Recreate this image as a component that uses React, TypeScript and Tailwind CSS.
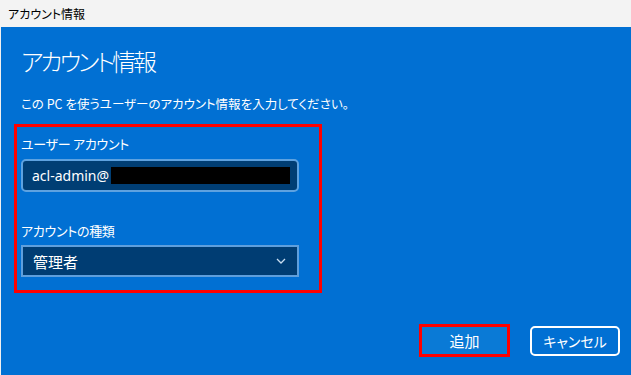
import React from "react";

const jp = "font-['Noto_Sans_CJK_JP','Noto_Sans',sans-serif] [font-feature-settings:'palt']";

export default function App() {
  return (
    <div className={`w-[631px] h-[375px] bg-[#f0f0f0] flex flex-col overflow-hidden ${jp}`}>
      <div className="h-[27px] bg-[#f3f3f3] flex items-center pl-[8px] text-[12px] leading-none text-black">
        アカウント情報
      </div>
      <div className="flex-1 ml-[1px] bg-[#0170d3] flex flex-col text-white pl-[20px]">
        <div className="mt-[18px] text-[24px] leading-[32px] font-light tracking-[-3px]">アカウント情報</div>
        <div className="mt-[18px] text-[12.5px] leading-[18px]">
          この PC を使うユーザーのアカウント情報を入力してください。
        </div>
        <div className="mt-[11px] ml-[-7px] w-[308px] h-[169px] border-[3px] border-[#ff0000] pl-[4px] pt-[8px] flex flex-col">
          <div className="text-[13px] leading-[18px] tracking-[-0.3px]">ユーザー アカウント</div>
          <div className="mt-[6px] w-[278px] h-[33px] rounded-[5px] border-2 border-[#5ea2e0] bg-[#003e74] flex items-center pl-[9px]">
            <span className="font-['Noto_Sans',sans-serif] text-[14px] leading-none [font-feature-settings:normal]">acl-admin@</span>
            <div className="ml-[2px] w-[179px] h-[17px] bg-black" />
          </div>
          <div className="mt-[30px] text-[13px] leading-[18px] tracking-[-0.3px]">アカウントの種類</div>
          <div className="mt-[5px] w-[278px] h-[32px] border-2 border-[#5f9fdc] bg-[#003d73] flex items-center justify-between pl-[10px] pr-[10px]">
            <span className="text-[15px] leading-none">管理者</span>
            <svg width="10" height="6" viewBox="0 0 10 6" className="mr-[1px]">
              <polyline points="1,1 5,5 9,1" fill="none" stroke="#c9ddf0" strokeWidth="1.3" />
            </svg>
          </div>
        </div>
        <div className="mt-auto pb-[18px] pr-[11px] flex justify-end items-center gap-[20px]">
          <div className="w-[91px] h-[33px] border-[3px] border-[#ff0000] bg-[#0a7ad6] flex items-center justify-center text-[15px] leading-none">
            追加
          </div>
          <div className="w-[90px] h-[30px] border-2 border-white rounded-[5px] flex items-center justify-center text-[14px] leading-none">
            キャンセル
          </div>
        </div>
      </div>
    </div>
  );
}
